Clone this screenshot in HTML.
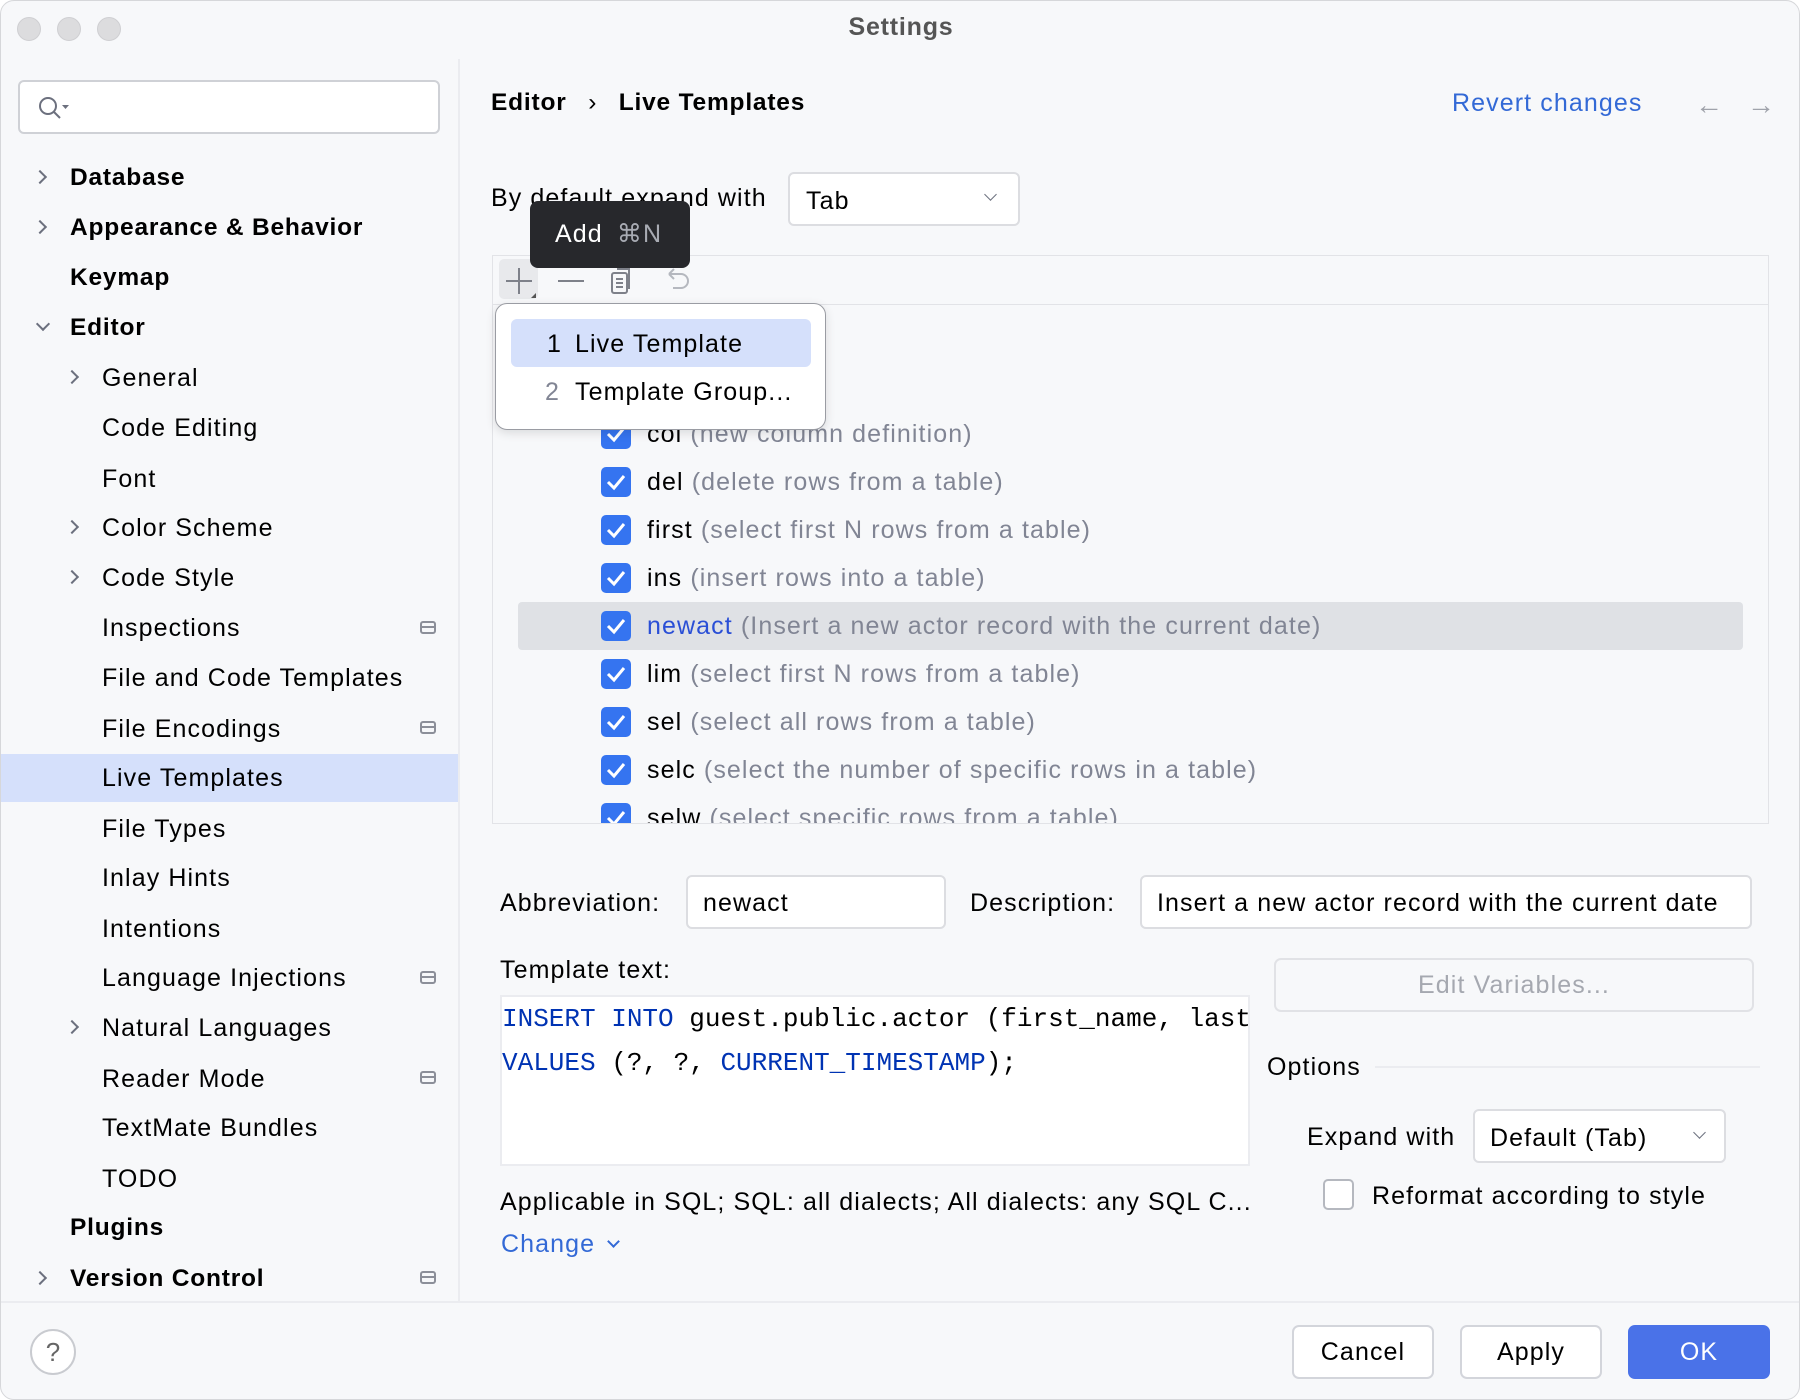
<!DOCTYPE html>
<html><head><meta charset="utf-8"><style>
*{box-sizing:border-box;margin:0;padding:0}
body{width:1800px;height:1400px;background:#fff;font-family:"Liberation Sans",sans-serif;font-size:25px;letter-spacing:1.1px;color:#000;position:relative;overflow:hidden}
b,.bold{font-weight:bold;letter-spacing:0.8px;font-size:24.5px}
.win{position:absolute;left:0;top:0;width:1800px;height:1400px;background:#f7f8fa;border-radius:14px;border:1px solid #d6d7da;overflow:hidden}
.a{position:absolute;white-space:nowrap}
.tl{position:absolute;top:16px;width:24px;height:24px;border-radius:50%;background:#dcdcde;border:1px solid #cfcfd2}
.item{position:absolute;line-height:30px;white-space:nowrap}
.chev{position:absolute;width:10px;height:10px;border-right:2px solid #6c707e;border-bottom:2px solid #6c707e}
.cb{position:absolute;width:30px;height:30px;border-radius:5px;background:#3574f0}
.cb svg{position:absolute;left:5px;top:6px}
.g{color:#818594}
.field{position:absolute;background:#fff;border:2px solid #dcdde1;border-radius:6px}
.btn{position:absolute;background:#fff;border:2px solid #d3d5db;border-radius:7px;text-align:center;line-height:50px}
.mini{position:absolute;width:16px;height:13px;border:2px solid #8c8f99;border-radius:3px}
.mini:after{content:"";position:absolute;left:0;right:0;top:3px;border-top:2px solid #8c8f99}
.mono{font-family:"Liberation Mono",monospace;font-size:26px;letter-spacing:0}
.kw{color:#0033b3}
</style></head><body><div class="win">
<div class="tl" style="left:16px"></div><div class="tl" style="left:56px"></div><div class="tl" style="left:96px"></div>
<div class="a bold" style="left:0;width:1800px;text-align:center;top:12px;color:#555;font-size:25px">Settings</div>
<div class="a" style="left:457px;top:58px;width:2px;height:1242px;background:#ebecf0"></div>
<div class="field" style="left:17px;top:79px;width:422px;height:54px;border-color:#cfd1d6">
<svg style="position:absolute;left:16px;top:12px" width="34" height="28"><circle cx="12" cy="12" r="8" fill="none" stroke="#6c707e" stroke-width="2"/><line x1="18" y1="18" x2="24" y2="24" stroke="#6c707e" stroke-width="2"/><path d="M26 11h7l-3.5 4z" fill="#6c707e"/></svg></div>
<div class="a" style="left:0;top:753px;width:457px;height:48px;background:#d5e0fb"></div>

<div class="chev" style="left:34px;top:171px;transform:rotate(-45deg)"></div>
<div class="item bold" style="left:69px;top:162px">Database</div>
<div class="chev" style="left:34px;top:221px;transform:rotate(-45deg)"></div>
<div class="item bold" style="left:69px;top:212px">Appearance &amp; Behavior</div>
<div class="item bold" style="left:69px;top:262px">Keymap</div>
<div class="chev" style="left:37px;top:318px;transform:rotate(45deg)"></div>
<div class="item bold" style="left:69px;top:312px">Editor</div>
<div class="chev" style="left:66px;top:371px;transform:rotate(-45deg)"></div>
<div class="item" style="left:101px;top:362px">General</div>
<div class="item" style="left:101px;top:412px">Code Editing</div>
<div class="item" style="left:101px;top:463px">Font</div>
<div class="chev" style="left:66px;top:521px;transform:rotate(-45deg)"></div>
<div class="item" style="left:101px;top:512px">Color Scheme</div>
<div class="chev" style="left:66px;top:571px;transform:rotate(-45deg)"></div>
<div class="item" style="left:101px;top:562px">Code Style</div>
<div class="item" style="left:101px;top:612px">Inspections</div><div class="mini" style="left:419px;top:620px"></div>
<div class="item" style="left:101px;top:662px">File and Code Templates</div>
<div class="item" style="left:101px;top:713px">File Encodings</div><div class="mini" style="left:419px;top:720px"></div>
<div class="item" style="left:101px;top:762px">Live Templates</div>
<div class="item" style="left:101px;top:813px">File Types</div>
<div class="item" style="left:101px;top:862px">Inlay Hints</div>
<div class="item" style="left:101px;top:913px">Intentions</div>
<div class="item" style="left:101px;top:962px">Language Injections</div><div class="mini" style="left:419px;top:970px"></div>
<div class="chev" style="left:66px;top:1021px;transform:rotate(-45deg)"></div>
<div class="item" style="left:101px;top:1012px">Natural Languages</div>
<div class="item" style="left:101px;top:1063px">Reader Mode</div><div class="mini" style="left:419px;top:1070px"></div>
<div class="item" style="left:101px;top:1112px">TextMate Bundles</div>
<div class="item" style="left:101px;top:1163px">TODO</div>
<div class="item bold" style="left:69px;top:1212px">Plugins</div>
<div class="chev" style="left:34px;top:1272px;transform:rotate(-45deg)"></div>
<div class="item bold" style="left:69px;top:1263px">Version Control</div><div class="mini" style="left:419px;top:1270px"></div>

<div class="a bold" style="left:490px;top:88px">Editor <span style="margin:0 14px;font-weight:normal">›</span> Live Templates</div>
<div class="a" style="left:1451px;top:88px;color:#3369d6">Revert changes</div>
<div class="a" style="left:1694px;top:88px;color:#a0a3ab;font-size:28px">←</div>
<div class="a" style="left:1746px;top:88px;color:#a0a3ab;font-size:28px">→</div>

<div class="a" style="left:490px;top:183px">By default expand with</div>
<div class="field" style="left:787px;top:171px;width:232px;height:54px"><span class="a" style="left:16px;top:13px">Tab</span><div class="chev" style="left:196px;top:16px;transform:rotate(45deg);width:9px;height:9px;border-width:1.5px"></div></div>

<div class="a" style="left:491px;top:254px;width:1277px;height:569px;border:1px solid #e2e3e7;background:#f7f8fa"></div>
<div class="a" style="left:492px;top:303px;width:1275px;height:1px;background:#e2e3e7"></div>
<div class="a" style="left:498px;top:258px;width:39px;height:40px;background:#e8e9ec;border-radius:5px"></div>
<svg class="a" style="left:500px;top:260px" width="200" height="40"><path d="M18 7v26M5 20h26" stroke="#7e818a" stroke-width="2"/><path d="M35 37l-5 0 5-5z" fill="#555"/><path d="M57 20h26" stroke="#7e818a" stroke-width="2"/><rect x="111" y="12" width="15" height="20" rx="2" fill="none" stroke="#7e818a" stroke-width="2"/><path d="M116 8h12v20M115 18h7M115 22h7M115 26h7" fill="none" stroke="#7e818a" stroke-width="2"/><path d="M168 13h12a7 7 0 0 1 0 14h-8M168 13l5-5M168 13l5 5" fill="none" stroke="#b5b8bf" stroke-width="2"/></svg>

<div class="a" style="left:517px;top:601px;width:1225px;height:48px;background:#dfe1e5;border-radius:4px"></div>
<div id="rows"></div>

<div class="a" style="left:494px;top:302px;width:331px;height:127px;background:#fff;border:1.5px solid #9a9ca3;border-radius:12px;box-shadow:0 3px 10px rgba(0,0,0,.12)">
<div class="a" style="left:15px;top:15px;width:300px;height:48px;background:#d5e0fb;border-radius:6px"></div>
<div class="a" style="left:51px;top:26px">1</div><div class="a" style="left:79px;top:26px">Live Template</div>
<div class="a" style="left:49px;top:74px;color:#818594">2</div><div class="a" style="left:79px;top:74px">Template Group...</div></div>

<div class="a" style="left:529px;top:200px;width:160px;height:67px;background:#27282c;border-radius:8px;color:#fff;line-height:67px;padding-left:25px">Add <span style="color:#a8abb3;margin-left:6px">⌘N</span></div>

<div class="a" style="left:499px;top:888px">Abbreviation:</div>
<div class="field" style="left:685px;top:874px;width:260px;height:54px"><span class="a" style="left:15px;top:12px">newact</span></div>
<div class="a" style="left:969px;top:888px">Description:</div>
<div class="field" style="left:1139px;top:874px;width:612px;height:54px"><span class="a" style="left:15px;top:12px">Insert a new actor record with the current date</span></div>

<div class="a" style="left:499px;top:955px">Template text:</div>
<div class="a" style="left:499px;top:994px;width:750px;height:171px;background:#fff;border:2px solid #ebecf0;overflow:hidden">
<div class="a mono" style="left:0;top:0;line-height:44px"><span class="kw">INSERT INTO</span> guest.public.actor (first_name, last_name)<br><span class="kw">VALUES</span> (?, ?, <span class="kw">CURRENT_TIMESTAMP</span>);</div></div>
<div class="btn" style="left:1273px;top:957px;width:480px;height:54px;border-color:#e1e2e6;background:#f7f8fa;color:#a5a8b0">Edit Variables...</div>
<div class="a" style="left:1266px;top:1052px">Options</div>
<div class="a" style="left:1374px;top:1065px;width:385px;height:2px;background:#ebecf0"></div>
<div class="a" style="left:1306px;top:1122px">Expand with</div>
<div class="field" style="left:1472px;top:1108px;width:253px;height:54px"><span class="a" style="left:15px;top:13px">Default (Tab)</span><div class="chev" style="left:220px;top:17px;transform:rotate(45deg);width:9px;height:9px;border-width:1.5px"></div></div>
<div class="a" style="left:1322px;top:1178px;width:31px;height:31px;border:2px solid #b5b8bf;border-radius:5px;background:#fff"></div>
<div class="a" style="left:1371px;top:1181px">Reformat according to style</div>
<div class="a" style="left:499px;top:1187px">Applicable in SQL; SQL: all dialects; All dialects: any SQL C...</div>
<div class="a" style="left:500px;top:1229px;color:#3369d6">Change <span style="display:inline-block;width:9px;height:9px;border-right:2px solid #3369d6;border-bottom:2px solid #3369d6;transform:rotate(45deg);margin:0 0 6px 6px"></span></div>

<div class="a" style="left:0;top:1300px;width:1800px;height:2px;background:#ebecf0"></div>
<div class="a" style="left:29px;top:1328px;width:46px;height:46px;border:2px solid #c9cbd0;border-radius:50%;background:#fff;text-align:center;line-height:42px;color:#666;font-size:26px;letter-spacing:0">?</div>
<div class="btn" style="left:1291px;top:1324px;width:142px;height:54px">Cancel</div>
<div class="btn" style="left:1459px;top:1324px;width:142px;height:54px">Apply</div>
<div class="btn" style="left:1627px;top:1324px;width:142px;height:54px;background:#4a72e8;border-color:#4a72e8;color:#fff">OK</div>
</div>
<script>
var r=[["col","new column definition"],["del","delete rows from a table"],["first","select first N rows from a table"],["ins","insert rows into a table"],["newact","Insert a new actor record with the current date"],["lim","select first N rows from a table"],["sel","select all rows from a table"],["selc","select the number of specific rows in a table"],["selw","select specific rows from a table"]];
var h="";r.forEach(function(x,i){var y=433+i*48;h+='<div class="cb" style="left:600px;top:'+(y-15)+'px"><svg width="20" height="18"><path d="M2 9l6 6L18 3" fill="none" stroke="#fff" stroke-width="3"/></svg></div><div class="a" style="left:646px;top:'+(y-14)+'px">'+(i==4?'<span style="color:#2a4fd6">':'<span>')+x[0]+'</span> <span class="g">('+x[1]+')</span></div>';});
var c=document.createElement('div');c.className='a';c.style.cssText='left:0;top:0;width:1800px;height:822px;clip-path:inset(410px 0 0 0)';c.innerHTML=h;document.getElementById('rows').replaceWith(c);
</script>
</body></html>
